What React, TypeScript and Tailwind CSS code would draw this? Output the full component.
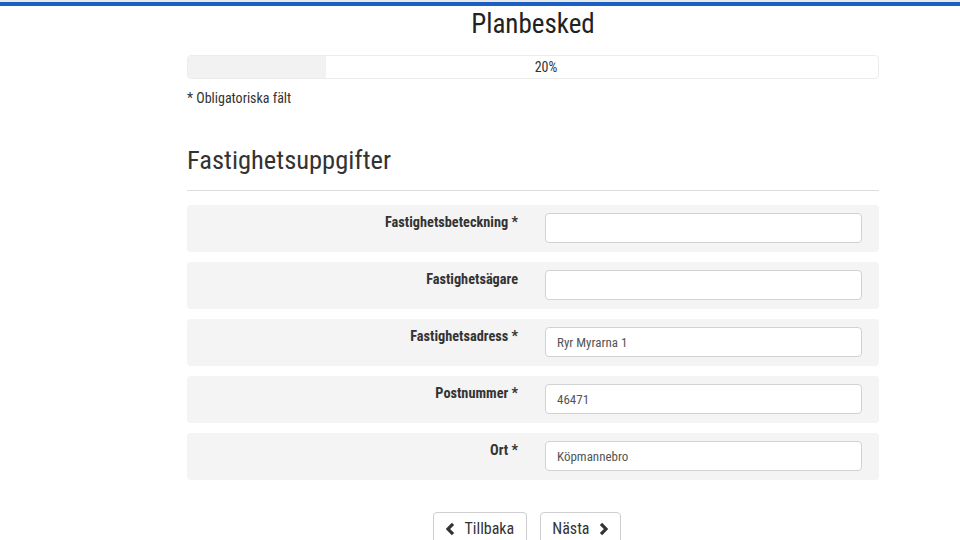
type Field = {
  label: string;
  required: boolean;
  value: string;
};

const fields: Field[] = [
  { label: "Fastighetsbeteckning", required: true, value: "" },
  { label: "Fastighetsägare", required: false, value: "" },
  { label: "Fastighetsadress", required: true, value: "Ryr Myrarna 1" },
  { label: "Postnummer", required: true, value: "46471" },
  { label: "Ort", required: true, value: "Köpmannebro" }
];

function Chevron({ dir }: { dir: "left" | "right" }) {
  const d = dir === "left" ? "M8 1.8 L3 7 L8 12.2" : "M2 1.8 L7 7 L2 12.2";
  return (
    <svg viewBox="0 0 10 14" className="h-[14px] w-[10px]" fill="none" stroke="currentColor" strokeWidth={3.2} strokeLinejoin="miter">
      <path d={d} />
    </svg>
  );
}

function FieldRow({ field }: { field: Field }) {
  return (
    <div className="grid grid-cols-[331px_317px] gap-x-[27px] rounded-[4px] bg-[#f4f4f4] pt-[8px] pb-[9px]">
      <label className="text-right text-[14.3px] font-bold leading-[18px] text-[#333]">
        {field.label}
        {field.required ? " *" : ""}
      </label>
      <input
        readOnly
        value={field.value}
        className="h-[30px] rounded-[4px] border border-[#d2d2d2] bg-white px-[11px] text-[13px] text-[#555] outline-none"
      />
    </div>
  );
}

export default function App() {
  return (
    <div className="min-h-[540px] bg-white font-['Roboto_Condensed',Roboto,sans-serif] text-[#333]">
      <div className="h-[2px] bg-[#e9e9e9]" />
      <div className="h-[4px] bg-[#1c5fc2]" />

      <div className="ml-[187px] w-[692px]">
        <h1 className="mt-[2px] text-center text-[27px] leading-[32px] font-normal text-[#222]">Planbesked</h1>

        <div className="mt-[15px] flex h-[24px] overflow-hidden rounded-[4px] border border-[#ececec] bg-white">
          <div className="w-[20%] bg-[#f2f2f2]" />
          <div className="flex flex-1 items-center justify-center pr-[112px] text-[14px] text-[#333]">20%</div>
        </div>

        <p className="mt-[9px] text-[14px] leading-[20px] text-[#333]">* Obligatoriska fält</p>

        <h2 className="mt-[36px] pb-[14px] text-[26.5px] leading-[32px] font-normal text-[#333]">Fastighetsuppgifter</h2>
        <div className="h-px bg-[#dcdcdc]" />

        <form className="mt-[14px] flex flex-col gap-[10px]">
          {fields.map((field) => (
            <FieldRow key={field.label} field={field} />
          ))}
        </form>

        <div className="mt-[32px] flex justify-center gap-[13px] pr-[12px]">
          <button className="flex h-[34px] items-center gap-[9px] rounded-[4px] border border-[#cfcfcf] bg-white pr-[12px] pl-[11px] text-[16px] text-[#333]">
            <Chevron dir="left" />
            Tillbaka
          </button>
          <button className="flex h-[34px] items-center gap-[9px] rounded-[4px] border border-[#cfcfcf] bg-white pr-[11px] pl-[11px] text-[16px] text-[#333]">
            Nästa
            <Chevron dir="right" />
          </button>
        </div>
      </div>
    </div>
  );
}
